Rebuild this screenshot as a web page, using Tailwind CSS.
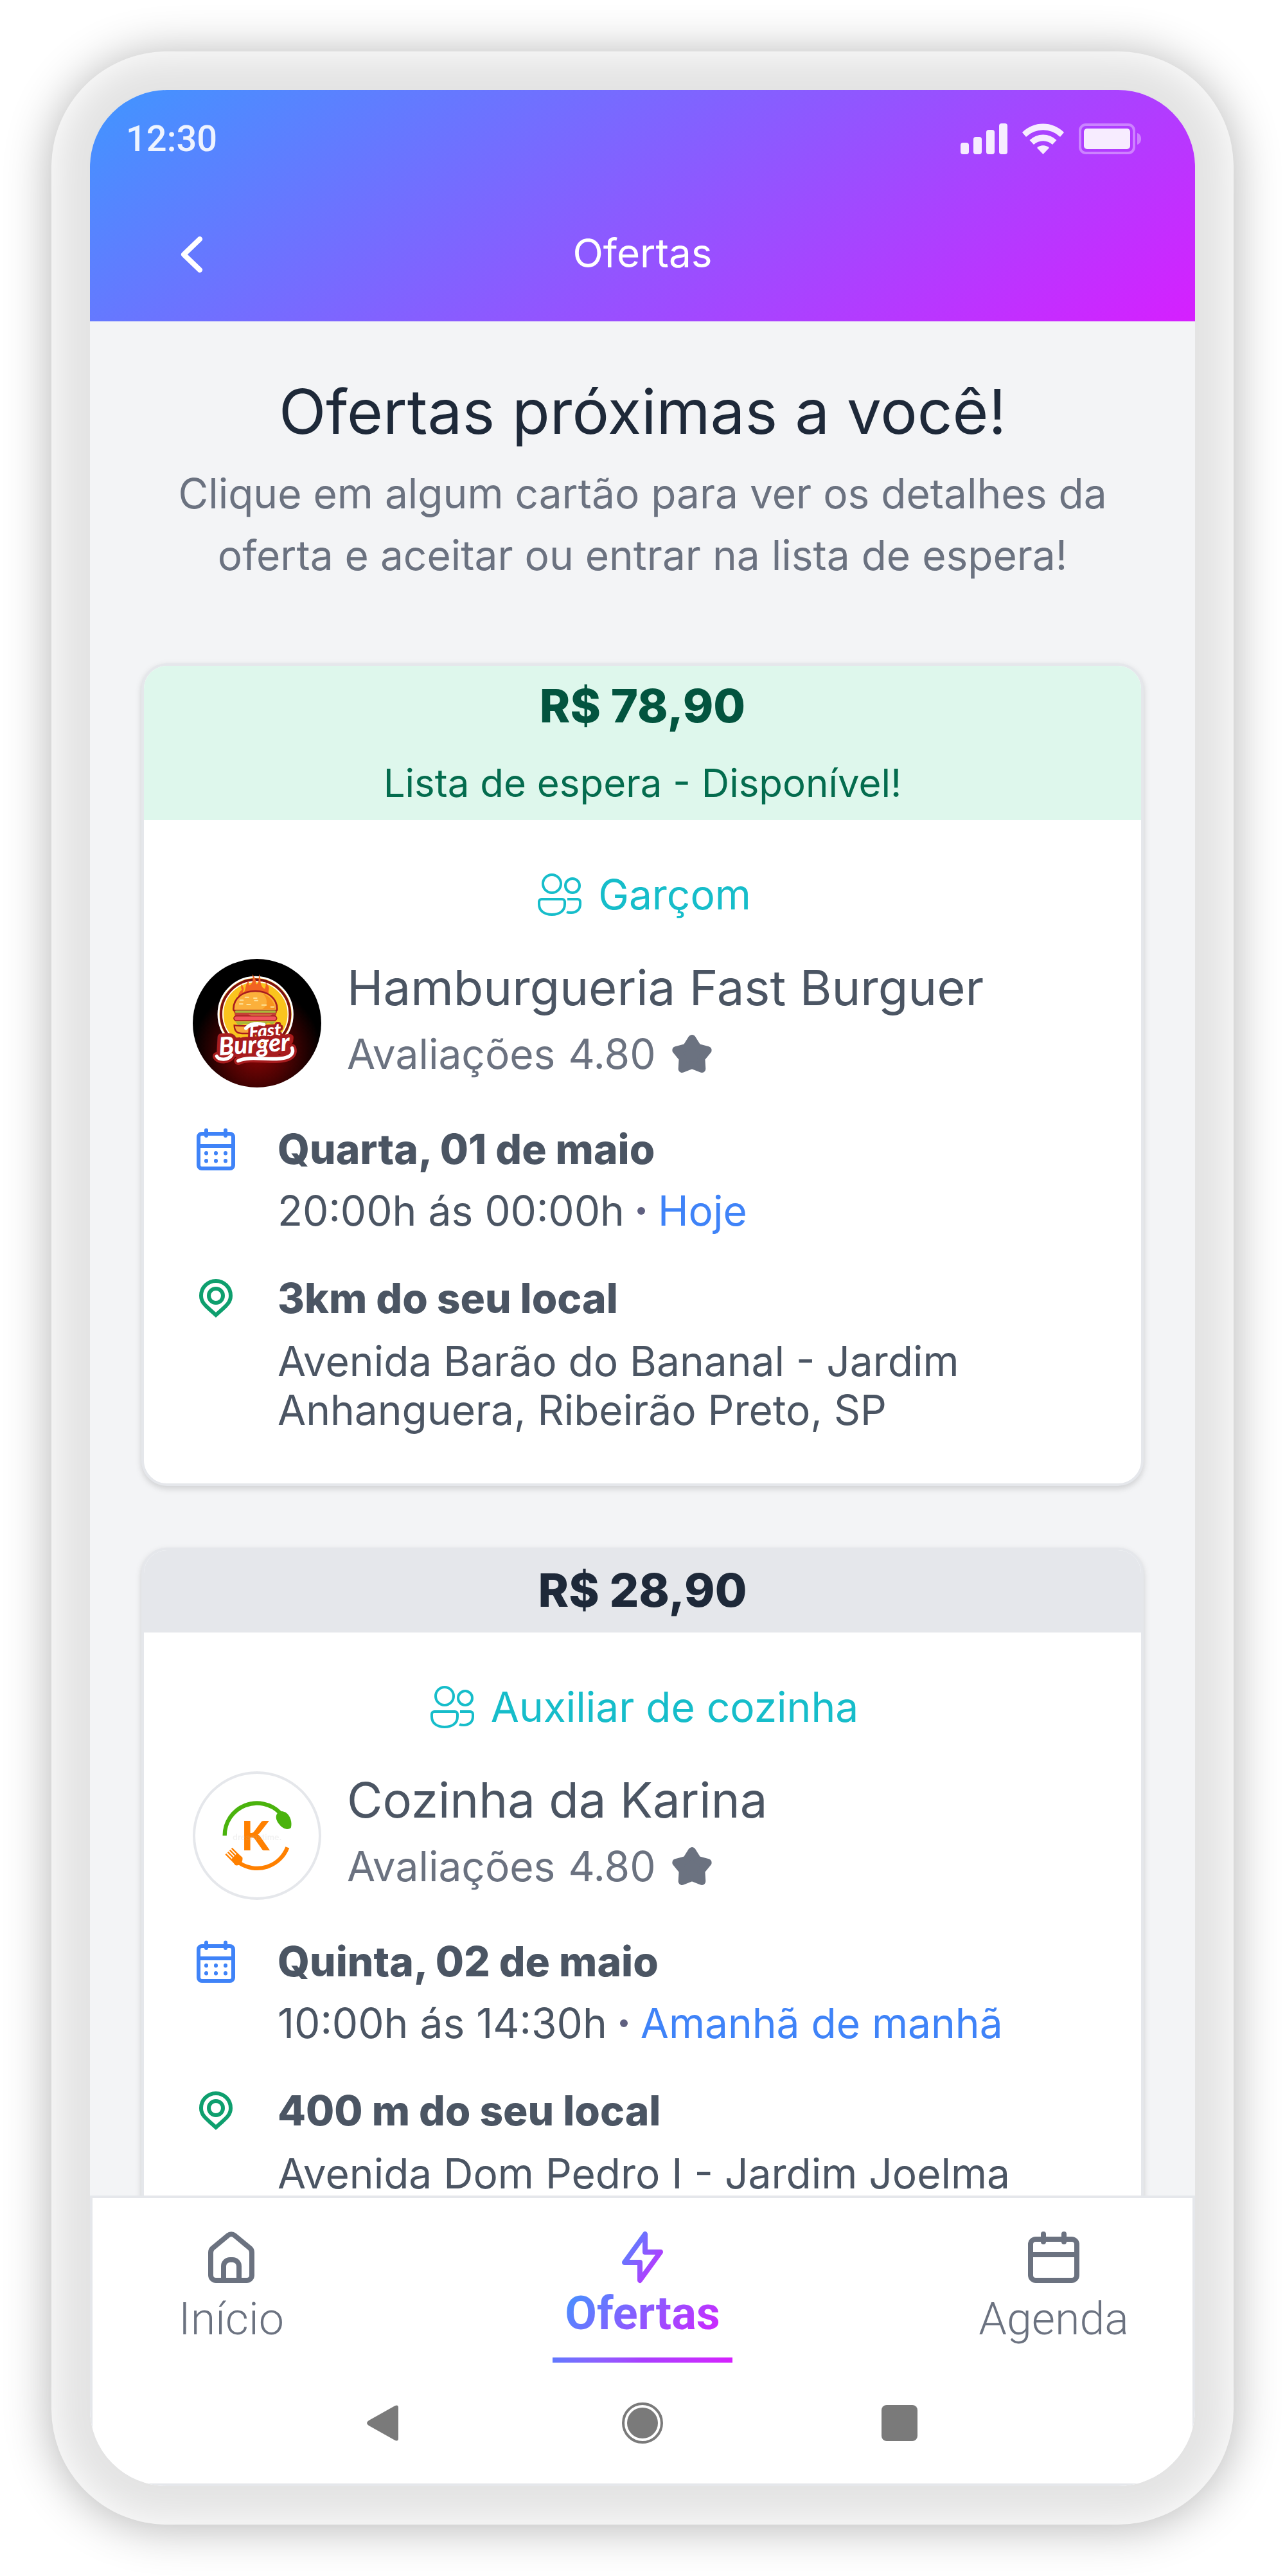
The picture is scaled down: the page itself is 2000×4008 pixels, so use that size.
<!DOCTYPE html>
<html lang="pt-BR">
<head>
<meta charset="utf-8">
<title>Ofertas</title>
<script src="https://cdn.jsdelivr.net/npm/@tailwindcss/browser@4"></script>
</head>
<body class="h-screen bg-white p-20 font-['Inter',sans-serif] text-[64px]">

<!-- Shared icons -->
<svg class="hidden" aria-hidden="true">
  <symbol id="users" viewBox="0 0 80 80">
    <g fill="none" stroke="currentColor" stroke-width="4">
      <circle cx="28" cy="23" r="14"/>
      <circle cx="60" cy="26" r="11"/>
      <path d="M12 47h32a4 4 0 0 1 4 4v4c0 10-8 16-20 16S8 65 8 55v-4a4 4 0 0 1 4-4z"/>
      <path d="M52 47h16a4 4 0 0 1 4 4v4c0 8-6 13-14 13-3 0-5 0-7-1"/>
    </g>
  </symbol>
  <symbol id="star" viewBox="0 0 72 72">
    <path d="M36 12l8.800 13.900L60.700 30 50.300 42.600 51.300 59 36 53 20.700 59 21.700 42.600 11.300 30 27.200 25.900z" fill="currentColor" stroke="currentColor" stroke-width="12" stroke-linejoin="round"/>
  </symbol>
  <symbol id="date" viewBox="0 0 72 72">
    <g fill="none" stroke="currentColor" stroke-width="6" stroke-linecap="round">
      <rect x="9" y="12" width="54" height="54" rx="5"/>
      <path d="M9 31h54" stroke-linecap="butt"/>
      <path d="M21 6.500V15M51 6.500V15M21 42v.500M36 42v.500M51 42v.500M21 54v.500M36 54v.500M51 54v.500"/>
    </g>
  </symbol>
  <symbol id="pin" viewBox="0 0 72 72">
    <g fill="none" stroke="currentColor" stroke-width="6">
      <circle cx="36" cy="32" r="11"/>
      <path d="M59 32c0 12-9 17-23 30C22 49 13 44 13 32a23 23 0 0 1 46 0z"/>
    </g>
  </symbol>
</svg>

<div class="h-full rounded-[180px] bg-[#e4e4e4] p-15 shadow-[0_4px_72px_rgba(0,0,0,0.3),inset_0_0_56px_8px_rgba(255,255,255,0.9)]">
  <div class="flex h-full flex-col overflow-hidden rounded-[120px] bg-[#f3f4f6]">

    <header class="bg-[linear-gradient(147deg,#4096ff,#d61fff)] pb-1 text-white">
      <div class="flex h-[152px] items-center justify-between pr-21 pl-14 text-white/90">
        <span class="font-['Roboto',sans-serif] text-[56px] font-medium">12:30</span>
        <svg class="h-12 w-[281px]" viewBox="0 0 281 48" fill="currentColor" aria-label="Sinal, Wi-Fi e bateria">
          <rect x="0" y="30" width="13" height="18" rx="4"/>
          <rect x="20" y="21" width="13" height="27" rx="4"/>
          <rect x="40" y="10" width="13" height="38" rx="4"/>
          <rect x="60" y="0" width="13" height="48" rx="4"/>
          <path d="M96 14a46 46 0 0 1 65 0l-6 7a38 38 0 0 0-53 0z"/>
          <path d="M107.500 26a30 30 0 0 1 42 0l-6.500 7a21 21 0 0 0-29 0z"/>
          <path d="M119 38a14 14 0 0 1 19 0l-9.500 10z"/>
          <rect x="186" y="2" width="84" height="44" rx="9" fill="none" stroke="currentColor" stroke-width="4" opacity=".4"/>
          <rect x="192" y="8" width="72" height="32" rx="5"/>
          <path d="M275 15c8 2 8 16 0 18z" opacity=".4"/>
        </svg>
      </div>
      <div class="grid h-[204px] grid-cols-3 items-center px-30">
        <button aria-label="Voltar" class="size-20">
          <svg class="size-20" viewBox="0 0 80 80" fill="none" stroke="currentColor" stroke-width="8" stroke-linecap="round" stroke-linejoin="round"><path d="M51 18L26 42l25 24"/></svg>
        </button>
        <p class="text-center text-[62px] leading-[96px]">Ofertas</p>
      </div>
    </header>

    <main class="flex-1 overflow-hidden px-20 pt-20">
      <h1 class="text-center text-[96px] leading-[120px] text-gray-800">Ofertas próximas a você!</h1>
      <p class="mt-5 text-center leading-[96px] text-[#6b7280]">Clique em algum cartão para ver os detalhes da<br>oferta e aceitar ou entrar na lista de espera!</p>

      <a href="#fast-burguer" class="mt-30 block overflow-hidden rounded-[40px] border-4 border-[#e5e7eb] bg-white text-[#4b5563] shadow-[0_4px_12px_rgba(0,0,0,0.1),0_4px_8px_rgba(0,0,0,0.06)]">
        <div class="bg-[#def7ec] text-center">
          <p class="text-[72px] leading-[124px] font-extrabold text-[#03543f]">R$ 78,90</p>
          <p class="text-[60px] leading-[116px] text-[#046c4e]">Lista de espera - Disponível!</p>
        </div>
        <div class="p-19">
          <div class="flex items-center justify-center gap-5 leading-[80px] text-[#16bdca]">
            <svg class="size-20"><use href="#users"/></svg>
            <span>Garçom</span>
          </div>
          <div class="mt-15 flex gap-10">
            <svg class="size-50 rounded-full" viewBox="60 66 600 600" role="img" aria-label="Fast Burger">
              <defs>
                <radialGradient id="glow" cx=".5" cy=".72" r=".5">
                  <stop offset="0" stop-color="#8a0505"/><stop offset=".5" stop-color="#4a0202"/><stop offset="1" stop-color="#000"/>
                </radialGradient>
              </defs>
              <rect x="60" y="66" width="600" height="600" fill="url(#glow)"/>
              <circle cx="353" cy="324" r="173" fill="#fac41e" stroke="#fff" stroke-width="9"/>
              <circle cx="353" cy="324" r="161" fill="none" stroke="#7d1012" stroke-width="12"/>
              <circle cx="353" cy="324" r="152" fill="none" stroke="#fff" stroke-width="5"/>
              <path d="M278 262c-10-25-4-40 12-52-6-12-6-18 0-27 1 10 8 14 8 24 0 8-6 8-2 16 14-8 6-36 24-54 2 10 1 16 4 20 16-6 20-28 14-52 10 12 18 26 17 44 4 6 6 2 9-2 6-12 3-28 6-42 2 10 6 14 6 25 0 16 2 20 6 30 6 12 10 10 14 14 6-12 6-20 3-34 8 12 16 18 17 32-2 12-4 18 0 26 22 8 20 28 10 42z" fill="#f26322"/>
              <path d="M250 300c0-48 40-84 102-84s102 36 102 84c0 6-4 8-8 8H258c-4 0-8-2-8-8z" fill="#fbb03b" stroke="#a81c1e" stroke-width="8"/>
              <path d="M385 226c34 14 56 40 60 74h-60c28-14 26-50 0-74z" fill="#f7931e"/>
              <path d="M305 245h16m42 15h-14m-68-1h14m18 20h16m30-30h-14m38 32h20m-110-5h-14m146 14h14" stroke="#fde29a" stroke-width="6" stroke-linecap="round"/>
              <rect x="256" y="305" width="194" height="15" rx="6" fill="#a9b83b" stroke="#a81c1e" stroke-width="4"/>
              <rect x="256" y="317" width="194" height="14" rx="6" fill="#c43f36"/>
              <path d="M320 326h110c-18 6-24 16-48 20-20-6-36-14-62-20z" fill="#fdd35a"/>
              <rect x="252" y="332" width="200" height="22" rx="11" fill="#f0545c" stroke="#a81c1e" stroke-width="5"/>
              <path d="M258 358h190l-16 14-20-8-24 12-28-10-30 12-26-10-30 10z" fill="#a9b83b"/>
              <path d="M254 376c60 6 130 2 196-2 2 26-14 40-40 40H290c-24 0-36-14-36-38z" fill="#f9a73a" stroke="#a81c1e" stroke-width="7"/>
              <g font-family="Lato, sans-serif" font-style="italic" font-weight="900" fill="#fff" stroke="#a81c1e" stroke-linejoin="round" paint-order="stroke">
                <path d="M172 520c10 20 56 20 70-6M272 542c60-28 160 4 224-16 26-8 36-24 28-44" fill="none" stroke-width="38" stroke-linecap="round"/>
                <text x="325" y="436" font-size="84" stroke-width="20" transform="rotate(-4 325 436)">Fast</text>
                <text x="184" y="516" font-size="116" stroke-width="34" transform="rotate(-4 184 516)">Burger</text>
              </g>
              <path d="M308 390c20-24 56-26 84-18M172 520c10 20 56 20 70-6M272 542c60-28 160 4 224-16 26-8 36-24 28-44" fill="none" stroke="#fff" stroke-width="16" stroke-linecap="round"/>
            </svg>
            <div>
              <h2 class="text-[76px] leading-[88px]">Hamburgueria Fast Burguer</h2>
              <p class="mt-3 flex items-center gap-5 leading-[96px] text-[#6b7280]"><span>Avaliações</span><span>4.80</span><svg class="size-18"><use href="#star"/></svg></p>
            </div>
          </div>
          <div class="mt-12 flex gap-15 leading-[96px]">
            <svg class="mt-3 size-18 shrink-0 text-[#3f83f8]"><use href="#date"/></svg>
            <div>
              <p class="font-extrabold">Quarta, 01 de maio</p>
              <p class="flex items-center gap-5"><span>20:00h ás 00:00h</span><span class="size-3 rounded-full bg-[#5f6080]"></span><span class="text-[#3f83f8]">Hoje</span></p>
            </div>
          </div>
          <div class="mt-10 flex gap-15">
            <svg class="mt-3 size-18 shrink-0 text-[#0e9f6e]"><use href="#pin"/></svg>
            <div>
              <p class="leading-[96px] font-extrabold">3km do seu local</p>
              <p class="mt-3 leading-[76px]">Avenida Barão do Bananal - Jardim<br>Anhanguera, Ribeirão Preto, SP</p>
            </div>
          </div>
        </div>
      </a>

      <a href="#cozinha-karina" class="mt-24 block overflow-hidden rounded-[40px] border-4 border-[#e5e7eb] bg-white text-[#4b5563] shadow-[0_4px_12px_rgba(0,0,0,0.1),0_4px_8px_rgba(0,0,0,0.06)]">
        <div class="bg-[#e5e7eb] pb-1 text-center">
          <p class="text-[72px] leading-[124px] font-extrabold text-gray-800">R$ 28,90</p>
        </div>
        <div class="p-19">
          <div class="flex items-center justify-center gap-5 leading-[80px] text-[#16bdca]">
            <svg class="size-20"><use href="#users"/></svg>
            <span>Auxiliar de cozinha</span>
          </div>
          <div class="mt-15 flex gap-10">
            <svg class="size-50" viewBox="60 78 600 600" role="img" aria-label="Cozinha da Karina">
              <circle cx="360" cy="378" r="294" fill="#fff" stroke="#e5e7eb" stroke-width="12"/>
              <path d="M209 378A151 151 0 0 1 468 272" fill="none" stroke="#4ab30d" stroke-width="19"/>
              <path d="M450 284c6-20 26-24 44-14 22 12 32 50 24 72-16 12-38 4-52-14-10-12-20-28-16-44z" fill="#4ab30d"/>
              <path d="M502 433A151 151 0 0 1 278 506" fill="none" stroke="#ff8000" stroke-width="19"/>
              <path d="M214 464l50 50M224 455l40 40M233 446l42 42M242 437l42 42" stroke="#ff8000" stroke-width="7"/>
              <path d="M240 488l28-28 24 20c2 14-2 24-14 34-6 4-14 4-20 2z" fill="#ff8000"/>
              <text x="286" y="447" font-family="Lato, sans-serif" font-weight="900" font-size="190" fill="#ff8000">K</text>
              <text x="246" y="398" font-family="Inter, sans-serif" font-weight="600" font-size="38" fill="#bbb" opacity=".2">dreamstime.</text>
            </svg>
            <div>
              <h2 class="text-[76px] leading-[88px]">Cozinha da Karina</h2>
              <p class="mt-3 flex items-center gap-5 leading-[96px] text-[#6b7280]"><span>Avaliações</span><span>4.80</span><svg class="size-18"><use href="#star"/></svg></p>
            </div>
          </div>
          <div class="mt-12 flex gap-15 leading-[96px]">
            <svg class="mt-3 size-18 shrink-0 text-[#3f83f8]"><use href="#date"/></svg>
            <div>
              <p class="font-extrabold">Quinta, 02 de maio</p>
              <p class="flex items-center gap-5"><span>10:00h ás 14:30h</span><span class="size-3 rounded-full bg-[#5f6080]"></span><span class="text-[#3f83f8]">Amanhã de manhã</span></p>
            </div>
          </div>
          <div class="mt-10 flex gap-15">
            <svg class="mt-3 size-18 shrink-0 text-[#0e9f6e]"><use href="#pin"/></svg>
            <div>
              <p class="leading-[96px] font-extrabold">400 m do seu local</p>
              <p class="mt-3 leading-[76px]">Avenida Dom Pedro I - Jardim Joelma</p>
            </div>
          </div>
        </div>
      </a>
    </main>

    <footer class="border-4 border-[#e5e7eb] bg-white">
      <nav class="flex justify-between px-19 pt-11 font-['Roboto',sans-serif] text-[70px] leading-[80px] text-[#6b7280]">
        <a href="#inicio" class="flex w-70 flex-col items-center font-light">
          <svg class="h-24 w-20" viewBox="0 0 80 96" fill="none" stroke="currentColor" stroke-width="8">
            <path d="M8 41c0-3 1-6 4-8l23-19a8 8 0 0 1 10 0l23 19c3 2 4 5 4 8v35a8 8 0 0 1-8 8H16a8 8 0 0 1-8-8z"/>
            <path d="M28 84V62a10 10 0 0 1 10-10h4a10 10 0 0 1 10 10v22"/>
          </svg>
          <span class="mt-2">Início</span>
        </a>
        <a href="#ofertas" aria-current="page" class="flex w-70 flex-col items-center font-bold">
          <svg class="h-24 w-20" viewBox="0 0 80 96" fill="none" stroke="url(#brand)" stroke-width="8" stroke-linejoin="round">
            <defs><linearGradient id="brand" gradientUnits="userSpaceOnUse" x1="0" y1="20" x2="80" y2="76"><stop stop-color="#4096ff"/><stop offset="1" stop-color="#d61fff"/></linearGradient></defs>
            <path d="M44 12v28h24L36 84V56H12z"/>
          </svg>
          <span class="bg-[linear-gradient(135deg,#4096ff,#d61fff)] bg-clip-text text-[72px] leading-[80px] text-transparent">Ofertas</span>
          <span class="mt-7 h-2 w-full bg-linear-to-r from-[#6078ff] via-[#a83dff] to-[#d61fff]"></span>
        </a>
        <a href="#agenda" class="flex w-70 flex-col items-center font-light">
          <svg class="size-24" viewBox="0 0 96 96" fill="none" stroke="currentColor" stroke-width="8">
            <rect x="12" y="20" width="72" height="64" rx="8"/>
            <path d="M12 44h72"/>
            <path d="M32 12v12M64 12v12" stroke-linecap="round"/>
          </svg>
          <span class="mt-2">Agenda</span>
        </a>
      </nav>
      <div class="flex h-47 items-center justify-center gap-80 text-[#7a7a7a]">
        <button aria-label="Voltar"><svg class="size-20" viewBox="0 0 80 80"><path d="M14 36L55 13q5-2 5 3v48q0 5-5 3L14 44q-6-4 0-8z" fill="currentColor"/></svg></button>
        <button aria-label="Tela inicial"><svg class="size-20" viewBox="0 0 80 80"><circle cx="40" cy="40" r="30" fill="none" stroke="currentColor" stroke-width="4"/><circle cx="40" cy="40" r="24" fill="currentColor"/></svg></button>
        <button aria-label="Recentes"><svg class="size-20" viewBox="0 0 80 80"><rect x="12" y="12" width="56" height="56" rx="8" fill="currentColor"/></svg></button>
      </div>
    </footer>
  </div>
</div>
</body>
</html>
